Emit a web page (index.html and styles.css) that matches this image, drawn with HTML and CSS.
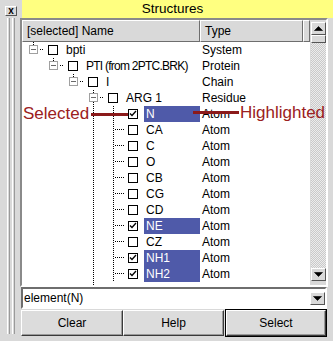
FILE: index.html
```html
<!DOCTYPE html>
<html>
<head>
<meta charset="utf-8">
<title>Structures</title>
<link rel="stylesheet" href="styles.css">
</head>
<body>
<div class="win">
  <div class="titlerow">
    <div class="closecell"><div class="closebtn">x</div></div>
    <div class="title">Structures</div>
  </div>
  <div class="main">
    <div class="sash"><div class="grip"></div></div>
    <div class="content">
      <div class="tablebox">
        <div class="table">
          <div class="hdr">
            <div class="hc hname">[selected] Name</div>
            <div class="hc htype">Type</div>
            <div class="hc hfill"></div>
          </div>
          <div class="body">
            <div class="row">
              <div class="nm">
                <svg class="sl" width="20" height="16"><path class="dt" d="M7.5 0V3"/><path class="dt" d="M14 7.5H18"/><rect x="3.5" y="3.5" width="8" height="8" class="bx"/><path class="mn" d="M5 7.5H10"/></svg>
                <svg class="cb" width="10" height="10"><rect x=".5" y=".5" width="9" height="9" class="cbr"/></svg>
                <span class="lbl">bpti</span>
              </div>
              <div class="ty">System</div>
            </div>
            <div class="row">
              <div class="nm">
                <i class="sl"></i>
                <svg class="sl" width="20" height="16"><path class="dt" d="M7.5 0V3"/><path class="dt" d="M14 7.5H18"/><rect x="3.5" y="3.5" width="8" height="8" class="bx"/><path class="mn" d="M5 7.5H10"/></svg>
                <svg class="cb" width="10" height="10"><rect x=".5" y=".5" width="9" height="9" class="cbr"/></svg>
                <span class="lbl tight">PTI (from 2PTC.BRK)</span>
              </div>
              <div class="ty">Protein</div>
            </div>
            <div class="row">
              <div class="nm">
                <i class="sl"></i><i class="sl"></i>
                <svg class="sl" width="20" height="16"><path class="dt" d="M7.5 0V3"/><path class="dt" d="M14 7.5H18"/><rect x="3.5" y="3.5" width="8" height="8" class="bx"/><path class="mn" d="M5 7.5H10"/></svg>
                <svg class="cb" width="10" height="10"><rect x=".5" y=".5" width="9" height="9" class="cbr"/></svg>
                <span class="lbl">I</span>
              </div>
              <div class="ty">Chain</div>
            </div>
            <div class="row">
              <div class="nm">
                <i class="sl"></i><i class="sl"></i><i class="sl"></i>
                <svg class="sl" width="20" height="16"><path class="dt" d="M7.5 0V3"/><path class="dt" d="M7.5 12V16"/><path class="dt" d="M14 7.5H18"/><rect x="3.5" y="3.5" width="8" height="8" class="bx"/><path class="mn" d="M5 7.5H10"/></svg>
                <svg class="cb" width="10" height="10"><rect x=".5" y=".5" width="9" height="9" class="cbr"/></svg>
                <span class="lbl">ARG 1</span>
              </div>
              <div class="ty">Residue</div>
            </div>
            <div class="row">
              <div class="nm">
                <i class="sl"></i><i class="sl"></i><i class="sl"></i>
                <svg class="sl" width="20" height="16"><path class="dt" d="M7.5 0V16"/></svg>
                <svg class="sl" width="20" height="16"><path class="dt" d="M7.5 0V16"/><path class="dt" d="M9 7.5H18"/></svg>
                <svg class="cb" width="10" height="10"><rect x=".5" y=".5" width="9" height="9" class="cbr"/><path class="ck" d="M2 4.5L4 6.5L8 2"/></svg>
                <span class="lbl hl">N</span>
              </div>
              <div class="ty">Atom</div>
            </div>
            <div class="row">
              <div class="nm">
                <i class="sl"></i><i class="sl"></i><i class="sl"></i>
                <svg class="sl" width="20" height="16"><path class="dt" d="M7.5 0V16"/></svg>
                <svg class="sl" width="20" height="16"><path class="dt" d="M7.5 0V16"/><path class="dt" d="M9 7.5H18"/></svg>
                <svg class="cb" width="10" height="10"><rect x=".5" y=".5" width="9" height="9" class="cbr"/></svg>
                <span class="lbl">CA</span>
              </div>
              <div class="ty">Atom</div>
            </div>
            <div class="row">
              <div class="nm">
                <i class="sl"></i><i class="sl"></i><i class="sl"></i>
                <svg class="sl" width="20" height="16"><path class="dt" d="M7.5 0V16"/></svg>
                <svg class="sl" width="20" height="16"><path class="dt" d="M7.5 0V16"/><path class="dt" d="M9 7.5H18"/></svg>
                <svg class="cb" width="10" height="10"><rect x=".5" y=".5" width="9" height="9" class="cbr"/></svg>
                <span class="lbl">C</span>
              </div>
              <div class="ty">Atom</div>
            </div>
            <div class="row">
              <div class="nm">
                <i class="sl"></i><i class="sl"></i><i class="sl"></i>
                <svg class="sl" width="20" height="16"><path class="dt" d="M7.5 0V16"/></svg>
                <svg class="sl" width="20" height="16"><path class="dt" d="M7.5 0V16"/><path class="dt" d="M9 7.5H18"/></svg>
                <svg class="cb" width="10" height="10"><rect x=".5" y=".5" width="9" height="9" class="cbr"/></svg>
                <span class="lbl">O</span>
              </div>
              <div class="ty">Atom</div>
            </div>
            <div class="row">
              <div class="nm">
                <i class="sl"></i><i class="sl"></i><i class="sl"></i>
                <svg class="sl" width="20" height="16"><path class="dt" d="M7.5 0V16"/></svg>
                <svg class="sl" width="20" height="16"><path class="dt" d="M7.5 0V16"/><path class="dt" d="M9 7.5H18"/></svg>
                <svg class="cb" width="10" height="10"><rect x=".5" y=".5" width="9" height="9" class="cbr"/></svg>
                <span class="lbl">CB</span>
              </div>
              <div class="ty">Atom</div>
            </div>
            <div class="row">
              <div class="nm">
                <i class="sl"></i><i class="sl"></i><i class="sl"></i>
                <svg class="sl" width="20" height="16"><path class="dt" d="M7.5 0V16"/></svg>
                <svg class="sl" width="20" height="16"><path class="dt" d="M7.5 0V16"/><path class="dt" d="M9 7.5H18"/></svg>
                <svg class="cb" width="10" height="10"><rect x=".5" y=".5" width="9" height="9" class="cbr"/></svg>
                <span class="lbl">CG</span>
              </div>
              <div class="ty">Atom</div>
            </div>
            <div class="row">
              <div class="nm">
                <i class="sl"></i><i class="sl"></i><i class="sl"></i>
                <svg class="sl" width="20" height="16"><path class="dt" d="M7.5 0V16"/></svg>
                <svg class="sl" width="20" height="16"><path class="dt" d="M7.5 0V16"/><path class="dt" d="M9 7.5H18"/></svg>
                <svg class="cb" width="10" height="10"><rect x=".5" y=".5" width="9" height="9" class="cbr"/></svg>
                <span class="lbl">CD</span>
              </div>
              <div class="ty">Atom</div>
            </div>
            <div class="row">
              <div class="nm">
                <i class="sl"></i><i class="sl"></i><i class="sl"></i>
                <svg class="sl" width="20" height="16"><path class="dt" d="M7.5 0V16"/></svg>
                <svg class="sl" width="20" height="16"><path class="dt" d="M7.5 0V16"/><path class="dt" d="M9 7.5H18"/></svg>
                <svg class="cb" width="10" height="10"><rect x=".5" y=".5" width="9" height="9" class="cbr"/><path class="ck" d="M2 4.5L4 6.5L8 2"/></svg>
                <span class="lbl hl">NE</span>
              </div>
              <div class="ty">Atom</div>
            </div>
            <div class="row">
              <div class="nm">
                <i class="sl"></i><i class="sl"></i><i class="sl"></i>
                <svg class="sl" width="20" height="16"><path class="dt" d="M7.5 0V16"/></svg>
                <svg class="sl" width="20" height="16"><path class="dt" d="M7.5 0V16"/><path class="dt" d="M9 7.5H18"/></svg>
                <svg class="cb" width="10" height="10"><rect x=".5" y=".5" width="9" height="9" class="cbr"/></svg>
                <span class="lbl">CZ</span>
              </div>
              <div class="ty">Atom</div>
            </div>
            <div class="row">
              <div class="nm">
                <i class="sl"></i><i class="sl"></i><i class="sl"></i>
                <svg class="sl" width="20" height="16"><path class="dt" d="M7.5 0V16"/></svg>
                <svg class="sl" width="20" height="16"><path class="dt" d="M7.5 0V16"/><path class="dt" d="M9 7.5H18"/></svg>
                <svg class="cb" width="10" height="10"><rect x=".5" y=".5" width="9" height="9" class="cbr"/><path class="ck" d="M2 4.5L4 6.5L8 2"/></svg>
                <span class="lbl hl">NH1</span>
              </div>
              <div class="ty">Atom</div>
            </div>
            <div class="row">
              <div class="nm">
                <i class="sl"></i><i class="sl"></i><i class="sl"></i>
                <svg class="sl" width="20" height="16"><path class="dt" d="M7.5 0V16"/></svg>
                <svg class="sl" width="20" height="16"><path class="dt" d="M7.5 0V16"/><path class="dt" d="M9 7.5H18"/></svg>
                <svg class="cb" width="10" height="10"><rect x=".5" y=".5" width="9" height="9" class="cbr"/><path class="ck" d="M2 4.5L4 6.5L8 2"/></svg>
                <span class="lbl hl">NH2</span>
              </div>
              <div class="ty">Atom</div>
            </div>
            <div class="row">
              <div class="nm">
                <i class="sl"></i><i class="sl"></i><i class="sl"></i>
                <svg class="sl" width="20" height="16"><path class="dt" d="M7.5 0V16"/></svg>
              </div>
              <div class="ty"></div>
            </div>
          </div>
        </div>
        <div class="vscroll">
          <div class="sbtn"><svg width="13" height="11"><path d="M2.5 7.5H10.5L6.5 3.5Z" class="tri"/></svg></div>
          <div class="thumb"></div>
          <div class="trough"></div>
          <div class="sbtn"><svg width="13" height="11"><path d="M2.5 3.5H10.5L6.5 7.5Z" class="tri"/></svg></div>
        </div>
      </div>
      <div class="combo">
        <div class="entry">element(N)</div>
        <div class="sbtn dbtn"><svg width="13" height="11"><path d="M2.5 3.5H10.5L6.5 7.5Z" class="tri"/></svg></div>
      </div>
      <div class="btns">
        <div class="btn b1">Clear</div>
        <div class="btn b2">Help</div>
        <div class="def"><div class="btn b3">Select</div></div>
      </div>
    </div>
  </div>
  <div class="anno a-sel">Selected</div>
  <div class="aline l-sel"></div>
  <div class="aline l-hl"></div>
  <div class="anno a-hl">Highlighted</div>
</div>
</body>
</html>
```

FILE: styles.css
```css
* { box-sizing: border-box; margin: 0; padding: 0; }
html, body { width: 333px; height: 341px; background: #d9d9d9; overflow: hidden; }
body { font-family: "Liberation Sans", Arial, sans-serif; font-size: 12px; color: #000; }

.win { position: relative; width: 333px; height: 341px; background: #d9d9d9; }

.titlerow { display: flex; height: 18px; }
.closecell { width: 22px; padding: 6px 0 0 5px; }
.closebtn {
  width: 12px; height: 10px;
  border: 1px solid; border-color: #fff #555 #555 #fff;
  font: bold 10px/7px "Liberation Sans", Arial, sans-serif;
  text-align: center; background: #d9d9d9;
}
.title {
  flex: 1; height: 18px; background: #ffff80;
  font-size: 13.5px; line-height: 18px; text-align: center; padding-right: 10px;
}

.main { display: flex; height: 320px; }
.sash { width: 20px; padding: 0 0 4px 7px; }
.grip {
  width: 9px; height: 100%;
  background: linear-gradient(to right,
    #ffffff 0 1px, #d9d9d9 1px 2px, #9a9a9a 2px 3px, #d9d9d9 3px 5px,
    #ffffff 5px 6px, #d9d9d9 6px 7px, #9a9a9a 7px 8px, #d9d9d9 8px);
}

.content { width: 308px; display: flex; flex-direction: column; }

.tablebox {
  height: 269px; display: flex;
  border: 2px solid; border-color: #8a8a8a #ffffff #ffffff #8a8a8a;
}
.table { width: 288px; display: flex; flex-direction: column; background: #fff; }
.hdr { display: flex; height: 22px; background: #d9d9d9; flex: none; }
.hc {
  border: 1px solid; border-color: #fff #6e6e6e #6e6e6e #fff;
  line-height: 20px; padding-left: 4px; white-space: nowrap;
}
.hname { width: 178px; }
.htype { width: 103px; }
.hfill { flex: 1; }

.body { flex: 1; overflow: hidden; }
.row { display: flex; height: 16px; line-height: 16px; }
.nm { width: 178px; display: flex; padding-left: 4px; flex: none; }
.sl { width: 20px; height: 16px; flex: none; display: block; }
.dt { stroke: #000; stroke-dasharray: 1 1; fill: none; }
.bx { fill: #fff; stroke: #a0a0a0; }
.mn { stroke: #6a6a6a; }
.cb { width: 10px; height: 10px; margin: 3px 0 0 2px; flex: none; display: block; }
.cbr { fill: #fff; stroke: #000; }
.ck { fill: none; stroke: #000; stroke-width: 1.3; }
.lbl { margin-left: 6px; padding-left: 2px; flex: 1; white-space: nowrap; }
.tight { letter-spacing: -0.75px; }
.hl { background: #4f5aa9; color: #fff; }
.ty { padding-left: 2px; }

.vscroll { width: 16px; display: flex; flex-direction: column; padding: 2px 0 4px 1px; }
.sbtn {
  width: 15px; height: 13px; flex: none;
  border: 1px solid; border-color: #fff #555 #555 #fff; background: #d9d9d9;
}
.sbtn svg { display: block; }
.tri { fill: #000; stroke: #000; stroke-width: 0.6; }
.thumb {
  width: 15px; height: 8px; flex: none;
  border: 1px solid; border-color: #fff #555 #555 #fff; background: #d9d9d9;
}
.trough {
  flex: 1; width: 15px;
  background: repeating-conic-gradient(#c9c9c9 0 25%, #ececec 0 50%) 0 0 / 2px 2px;
}

.combo {
  display: flex; align-items: center; height: 22px; width: 306px; margin-left: 1px;
  border: 2px solid; border-color: #6e6e6e #ffffff #ffffff #6e6e6e; background: #fff;
}
.entry { flex: 1; padding-left: 1px; line-height: 18px; }

.btns { display: flex; align-items: center; height: 28px; padding-left: 1px; }
.btn {
  height: 26px; line-height: 24px; text-align: center;
  border: 1px solid; border-color: #fff #3a3a3a #3a3a3a #fff;
  box-shadow: inset -1px -1px 0 #9a9a9a;
  background: #dcdcdc;
}
.b1 { width: 102px; }
.b2 { width: 101px; }
.def { width: 102px; height: 28px; margin-left: 1px; border: 1px solid #000; }
.b3 { width: 100px; }

.anno {
  position: absolute; font-size: 17px; line-height: 20px; color: #9b2020;
  font-family: "Liberation Sans", Arial, sans-serif; white-space: nowrap;
}
.a-sel { left: 23px; top: 104px; }
.a-hl { left: 240px; top: 103px; }
.aline { position: absolute; height: 3px; background: #8b1a1a; }
.l-sel { left: 91px; top: 113px; width: 37px; }
.l-hl { left: 193px; top: 111px; width: 46px; }
```
